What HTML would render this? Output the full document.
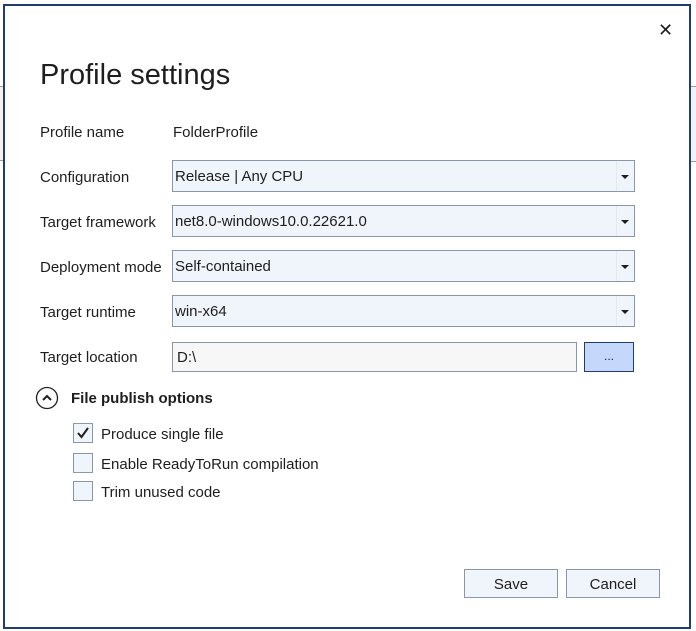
<!DOCTYPE html>
<html><head><meta charset="utf-8"><style>
*{margin:0;padding:0;box-sizing:border-box}
body{width:696px;height:631px;background:#fff;position:relative;overflow:hidden;font-family:"Liberation Sans",sans-serif;color:#1e1e1e;font-size:15px}
.bg1{position:absolute;left:0;top:86px;width:4px;height:75px;background:#f2f2f2;border-top:1px solid #999;border-bottom:1px solid #999}
.bg2{position:absolute;left:691px;top:86px;width:5px;height:76px;background:#f2f2f2;border-top:1px solid #999;border-bottom:1px solid #999}
.dlg{position:absolute;left:3px;top:4px;width:688px;height:625px;border:2px solid #203c72;background:#fff}
.a{position:absolute}
.lbl{position:absolute;left:40px}
.dd{position:absolute;left:172px;width:463px;height:32px;background:#f0f4fb;border:1px solid #8a97ab;padding-left:2px;line-height:31px}
.dd:after{content:"";position:absolute;right:0;top:0;width:17px;height:30px;border-left:1px solid #e4e8f0}
.dd i{position:absolute;right:5px;top:14px;width:0;height:0;border-left:4px solid transparent;border-right:4px solid transparent;border-top:4px solid #1e1e1e;z-index:1}
.cb{position:absolute;left:73px;width:20px;height:20px;background:#f0f4fb;border:1px solid #8a97ab}
.btn{position:absolute;top:569px;width:94px;height:29px;background:#f0f4fb;border:1px solid #8a97ab;text-align:center;line-height:29px}
</style></head><body>
<div class="bg1"></div><div class="bg2"></div>
<div class="dlg"></div>
<div class="a" style="left:658px;top:20px;font-size:18px;line-height:20px">✕</div>
<div class="a" style="left:40px;top:57px;font-size:29px;line-height:36px;color:#1e1e1e">Profile settings</div>
<div class="lbl" style="top:124px">Profile name</div>
<div class="a" style="left:173px;top:124px">FolderProfile</div>
<div class="lbl" style="top:169px">Configuration</div>
<div class="dd" style="top:160px">Release | Any CPU<i></i></div>
<div class="lbl" style="top:214px">Target framework</div>
<div class="dd" style="top:205px">net8.0-windows10.0.22621.0<i></i></div>
<div class="lbl" style="top:259px">Deployment mode</div>
<div class="dd" style="top:250px">Self-contained<i></i></div>
<div class="lbl" style="top:304px">Target runtime</div>
<div class="dd" style="top:295px">win-x64<i></i></div>
<div class="lbl" style="top:349px">Target location</div>
<div class="a" style="left:172px;top:342px;width:405px;height:30px;background:#f7f7f7;border:1px solid #8a97ab;padding-left:4px;line-height:29px">D:\</div>
<div class="a" style="left:584px;top:342px;width:50px;height:30px;background:#c5d7fb;border:1px solid #203c72;text-align:center;line-height:26px;font-size:12px">...</div>
<svg class="a" style="left:35px;top:386px" width="24" height="24"><circle cx="12" cy="12" r="10.5" fill="none" stroke="#1e1e1e" stroke-width="1.3"/><path d="M8 14 L12 10 L16 14" fill="none" stroke="#1e1e1e" stroke-width="2"/></svg>
<div class="a" style="left:71px;top:390px;font-size:15px;font-weight:600">File publish options</div>
<div class="cb" style="top:423px"><svg width="18" height="18"><path d="M4 9 L7.5 13 L14 4" fill="none" stroke="#1e1e1e" stroke-width="2"/></svg></div>
<div class="a" style="left:101px;top:426px">Produce single file</div>
<div class="cb" style="top:453px"></div>
<div class="a" style="left:101px;top:456px">Enable ReadyToRun compilation</div>
<div class="cb" style="top:481px"></div>
<div class="a" style="left:101px;top:484px">Trim unused code</div>
<div class="btn" style="left:464px">Save</div>
<div class="btn" style="left:566px">Cancel</div>
</body></html>
